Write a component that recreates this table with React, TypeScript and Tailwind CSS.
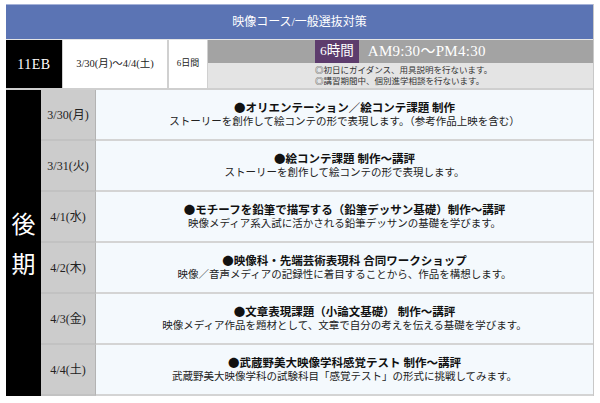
const jp = "font-['Liberation_Serif','Noto_Sans_CJK_JP',serif]"

interface Session {
  date: string
  title: string
  desc: string
}

const sessions: Session[] = [
  {
    date: '3/30(月)',
    title: 'オリエンテーション／絵コンテ課題 制作',
    desc: 'ストーリーを創作して絵コンテの形で表現します。（参考作品上映を含む）',
  },
  {
    date: '3/31(火)',
    title: '絵コンテ課題 制作〜講評',
    desc: 'ストーリーを創作して絵コンテの形で表現します。',
  },
  {
    date: '4/1(水)',
    title: 'モチーフを鉛筆で描写する（鉛筆デッサン基礎）制作〜講評',
    desc: '映像メディア系入試に活かされる鉛筆デッサンの基礎を学びます。',
  },
  {
    date: '4/2(木)',
    title: '映像科・先端芸術表現科 合同ワークショップ',
    desc: '映像／音声メディアの記録性に着目することから、作品を構想します。',
  },
  {
    date: '4/3(金)',
    title: '文章表現課題（小論文基礎） 制作〜講評',
    desc: '映像メディア作品を題材として、文章で自分の考えを伝える基礎を学びます。',
  },
  {
    date: '4/4(土)',
    title: '武蔵野美大映像学科感覚テスト 制作〜講評',
    desc: '武蔵野美大映像学科の試験科目「感覚テスト」の形式に挑戦してみます。',
  },
]

function SessionRow({ s }: { s: Session }) {
  return (
    <div className="flex h-[51px]">
      {/* Date */}
      <div className="w-[55px] shrink-0 flex items-center justify-center bg-[#cccccc] border-b-2 border-r border-[#c2c2c2] border-r-[#b3b3b3]">
        <span className={`${jp} text-[12px] text-[#222]`}>{s.date}</span>
      </div>

      {/* Content */}
      <div className="flex-1 flex flex-col items-center justify-center gap-[3px] bg-[#f4f9fd] border-b-2 border-[#d4d4d4]">
        <p className={`${jp} text-[11.5px] font-bold leading-none text-[#111]`}>
          <span className="font-['Noto_Sans_CJK_JP',sans-serif]">●</span>
          {s.title}
        </p>
        <p className={`${jp} text-[10.5px] leading-none text-[#222]`}>{s.desc}</p>
      </div>
    </div>
  )
}

export default function App() {
  return (
    <div className="w-[600px] h-[403px] bg-white pt-[4px] pl-[6px]">
      <div className="w-[588px] border-r border-[#c8c8c8]">
        {/* Course title bar */}
        <div className="h-[35px] flex items-center justify-center bg-[#5b74b4] border-t border-[#a5b2d8]">
          <span className={`${jp} text-[12px] text-white`}>映像コース/一般選抜対策</span>
        </div>

        {/* Course info row */}
        <div className="flex h-[51px] border-t border-[#e5e5e5] border-b-2 border-b-[#cfcfcf] bg-[#d0d0d0] gap-[1px]">
          <div className="w-[56px] shrink-0 bg-black flex items-center justify-center">
            <span className="font-['Liberation_Serif',serif] text-[14px] text-white tracking-[0.5px]">11EB</span>
          </div>
          <div className="w-[104px] shrink-0 bg-white flex items-center justify-center mr-[1px]">
            <span className={`${jp} text-[10.5px] text-[#222]`}>3/30(月)〜4/4(土)</span>
          </div>
          <div className="w-[38px] shrink-0 bg-white flex items-center justify-center">
            <span className={`${jp} text-[9px] text-[#222]`}>6日間</span>
          </div>
          <div className="flex-1 flex flex-col">
            <div className="h-[23px] bg-[#a3a3a3] flex items-center pl-[107px] gap-[9px]">
              <span className={`h-full px-[5px] flex items-center bg-[#5d3c6d] ${jp} text-[13.5px] text-white`}>6時間</span>
              <span className={`${jp} text-[15px] text-white tracking-[0.3px]`}>AM9:30〜PM4:30</span>
            </div>
            <div className="flex-1 bg-[#e4e4e4] flex flex-col justify-center pl-[107px] gap-[1px]">
              <p className={`${jp} text-[8.5px] leading-[10px] text-[#333]`}>◎初日にガイダンス、用具説明を行ないます。</p>
              <p className={`${jp} text-[8.5px] leading-[10px] text-[#333]`}>◎講習期間中、個別進学相談を行ないます。</p>
            </div>
          </div>
        </div>

        {/* Schedule */}
        <div className="flex">
          <div className="w-[35px] shrink-0 bg-black flex flex-col items-center justify-center">
            <span className="font-['Noto_Sans_CJK_JP',serif] text-[24px] leading-[40px] text-white">後</span>
            <span className="font-['Noto_Sans_CJK_JP',serif] text-[24px] leading-[40px] text-white">期</span>
          </div>
          <div className="flex-1 flex flex-col">
            {sessions.map((s) => (
              <SessionRow key={s.date} s={s} />
            ))}
          </div>
        </div>
      </div>
    </div>
  )
}
